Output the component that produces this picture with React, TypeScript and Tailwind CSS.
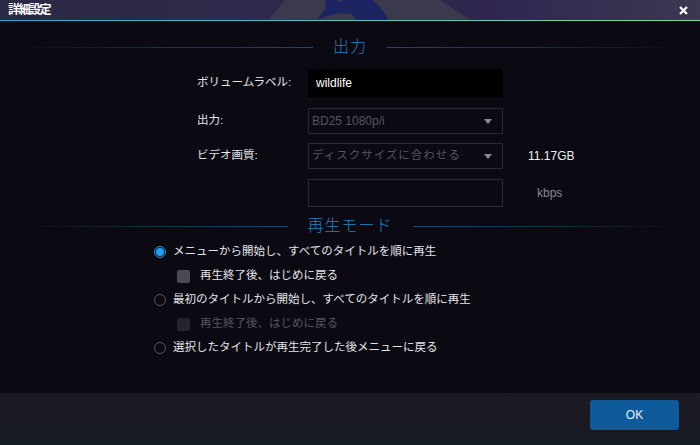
import { useState } from "react";

type Mode = "menu" | "title" | "back";

const SectionHeading = ({ title }: { title: string }) => (
  <div className="flex items-center h-[20px] px-[15px]">
    <div className="flex-1 h-px bg-gradient-to-r from-transparent via-[#163247] to-[#1d4864]" />
    <span className="mx-[20px] text-[16px] leading-none font-light text-[#1f84bd] tracking-[1px]">
      {title}
    </span>
    <div className="flex-1 h-px bg-gradient-to-r from-[#1d4864] via-[#163247] to-transparent" />
  </div>
);

const Arrow = () => (
  <svg width="8" height="5" viewBox="0 0 8 5" className="mr-[10px]">
    <path d="M0 0h8L4 5z" fill="#8a8992" />
  </svg>
);

const Radio = ({ checked, onClick, label }: { checked: boolean; onClick: () => void; label: string }) => (
  <div className="flex items-center h-[24px] pl-[154px] cursor-pointer" onClick={onClick}>
    {checked ? (
      <span className="w-[12px] h-[12px] rounded-full border border-[#1d9be8] flex items-center justify-center">
        <span className="w-[8px] h-[8px] rounded-full bg-[#1ea3f4]" />
      </span>
    ) : (
      <span className="w-[12px] h-[12px] rounded-full border border-[#56555f]" />
    )}
    <span className="ml-[7px] text-[11.5px] text-[#e4e4e8]">{label}</span>
  </div>
);

const Check = ({ disabled, label }: { disabled?: boolean; label: string }) => (
  <div className="flex items-center h-[24px] pl-[177px]">
    <span className={disabled ? "w-[13px] h-[13px] rounded-[2px] bg-[#25242c]" : "w-[13px] h-[13px] rounded-[2px] bg-[#4a4952]"} />
    <span className={disabled ? "ml-[10px] text-[11.5px] text-[#55545d]" : "ml-[10px] text-[11.5px] text-[#e4e4e8]"}>
      {label}
    </span>
  </div>
);

export default function App() {
  const [mode, setMode] = useState<Mode>("menu");
  const [label, setLabel] = useState("wildlife");

  return (
    <div
      className="w-[700px] h-[445px] flex flex-col bg-[#0b0a13] overflow-hidden"
      style={{ fontFamily: '"Liberation Sans", "Noto Sans CJK JP", sans-serif' }}
    >
      {/* title bar */}
      <div className="relative h-[20px] flex items-center justify-between px-[8px]">
        <svg className="absolute inset-0" width="700" height="20" viewBox="0 0 700 20" preserveAspectRatio="none">
          <defs>
            <linearGradient id="tb" x1="0" x2="1" y1="0" y2="0">
              <stop offset="0" stopColor="#2a2946" />
              <stop offset="0.35" stopColor="#2e2a4b" />
              <stop offset="0.7" stopColor="#30264f" />
              <stop offset="1" stopColor="#3b3853" />
            </linearGradient>
          </defs>
          <rect width="700" height="20" fill="url(#tb)" />
          <path d="M268 20 L285 0 L440 0 L470 20 Z" fill="#3a3a4c" />
          <path d="M318 20 C322 10 330 4 345 0 L372 0 C380 6 386 14 388 20 Z" fill="#1c2462" />
          <path d="M318 20 C330 14 340 12 352 14 L356 20 Z" fill="#3a3a4c" />
          <circle cx="332" cy="4" r="7" fill="#1c2462" />
        </svg>
        <span className="relative text-[12px] font-bold text-white tracking-[-1.5px]">詳細設定</span>
        <svg className="relative mr-[4px]" width="9" height="9" viewBox="0 0 9 9">
          <path d="M1 1l7 7M8 1L1 8" stroke="#fff" strokeWidth="2.2" />
        </svg>
      </div>
      <div className="h-px bg-gradient-to-r from-[#2aa6cc] to-[#82d9a4]" />

      <div className="flex-1 flex flex-col pt-[16px]">
        <SectionHeading title="出力" />

        <div className="mt-[12px] pl-[197px] flex flex-col text-[11.5px] text-[#e6e6ea]">
          <div className="flex items-center h-[28px]">
            <span className="w-[111px]">ボリュームラベル:</span>
            <input
              value={label}
              onChange={(e) => setLabel(e.target.value)}
              className="w-[195px] h-[28px] bg-black px-[8px] text-[12px] text-white outline-none"
            />
          </div>
          <div className="flex items-center h-[26px] mt-[11px]">
            <span className="w-[111px]">出力:</span>
            <div className="w-[195px] h-[26px] border border-[#2a2934] flex items-center justify-between pl-[3px]">
              <span className="text-[#56555e] text-[12px]">BD25 1080p/i</span>
              <Arrow />
            </div>
          </div>
          <div className="flex items-center h-[26px] mt-[9px]">
            <span className="w-[111px]">ビデオ画質:</span>
            <div className="w-[195px] h-[26px] border border-[#2a2934] flex items-center justify-between pl-[3px]">
              <span className="text-[#56555e] text-[11.5px] tracking-[1px]">ディスクサイズに合わせる</span>
              <Arrow />
            </div>
            <span className="ml-[25px] text-[12px] text-[#f0f0f2]">11.17GB</span>
          </div>
          <div className="flex items-center h-[28px] mt-[10px]">
            <span className="w-[111px]" />
            <div className="w-[195px] h-[28px] border border-[#2a2934]" />
            <span className="ml-[34px] text-[12px] text-[#8a8992]">kbps</span>
          </div>
        </div>

        <div className="mt-[9px]">
          <SectionHeading title="再生モード" />
        </div>

        <div className="mt-[4px] flex flex-col">
          <Radio
            checked={mode === "menu"}
            onClick={() => setMode("menu")}
            label="メニューから開始し、すべてのタイトルを順に再生"
          />
          <Check label="再生終了後、はじめに戻る" />
          <Radio
            checked={mode === "title"}
            onClick={() => setMode("title")}
            label="最初のタイトルから開始し、すべてのタイトルを順に再生"
          />
          <Check disabled label="再生終了後、はじめに戻る" />
          <Radio
            checked={mode === "back"}
            onClick={() => setMode("back")}
            label="選択したタイトルが再生完了した後メニューに戻る"
          />
        </div>
      </div>

      {/* footer */}
      <div className="h-[52px] bg-gradient-to-b from-[#1c1b23] via-[#1b1a22] to-[#131b22] flex items-start justify-end pt-[7px] pr-[21px]">
        <button className="w-[89px] h-[30px] rounded-[3px] bg-[#0f5a9b] text-[12px] text-[#e8eef6]">
          OK
        </button>
      </div>
    </div>
  );
}
